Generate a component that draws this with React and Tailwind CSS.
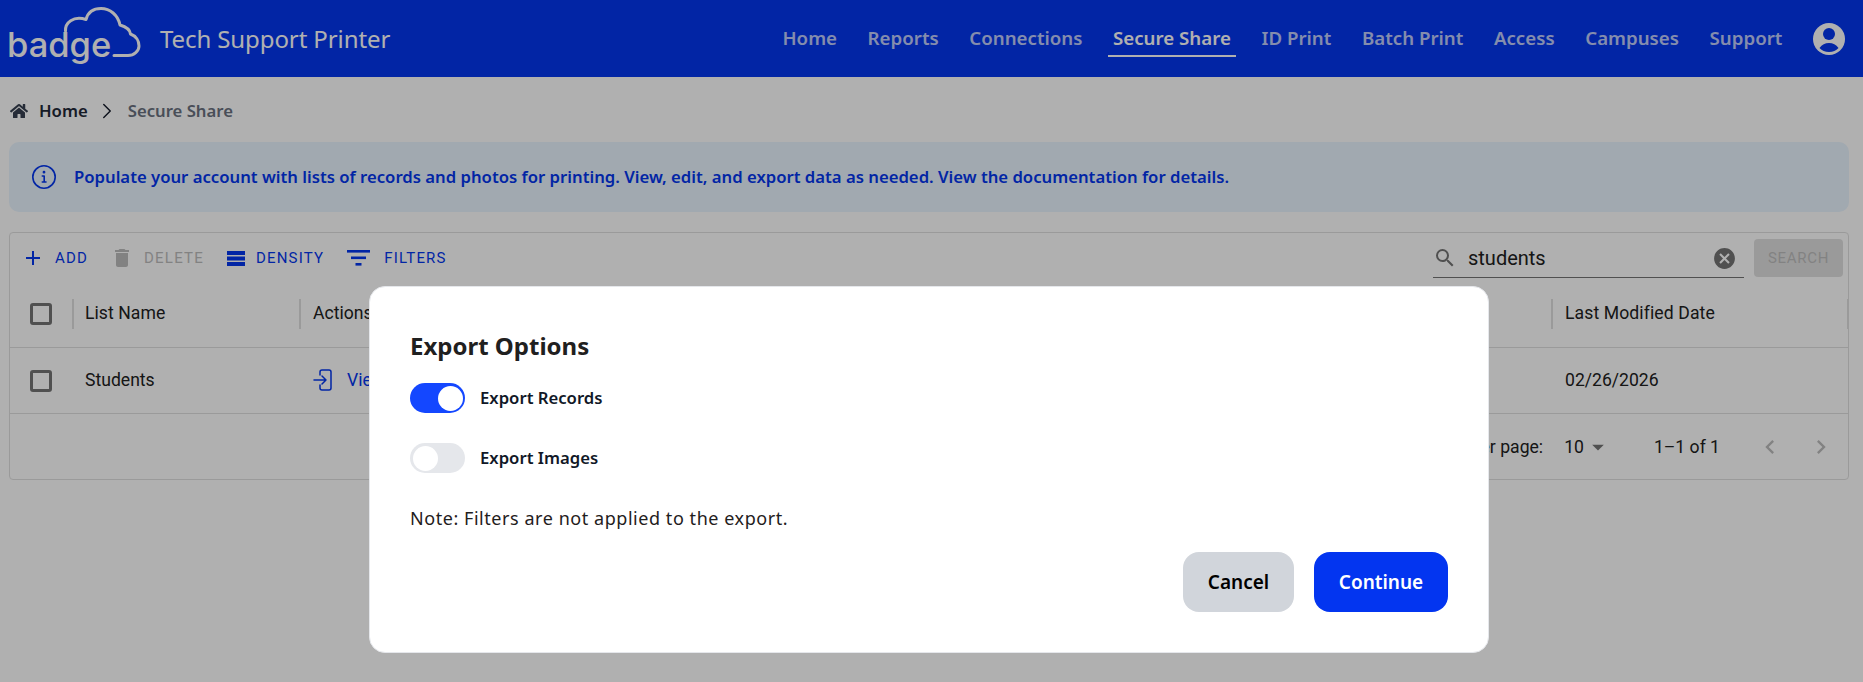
import React from "react";
import { MdAdd, MdDelete, MdSearch, MdCancel, MdArrowDropDown, MdChevronLeft, MdChevronRight } from "react-icons/md";
import { FaHome } from "react-icons/fa";
import { ChevronRight } from "lucide-react";

const seg = { fontFamily: '"Noto Sans", "Open Sans", sans-serif' };
const rob = { fontFamily: 'Roboto, sans-serif' };

const navItems = [
  ["Home", 0], ["Reports", 0], ["Connections", 0], ["Secure Share", 1], ["ID Print", 0],
  ["Batch Print", 0], ["Access", 0], ["Campuses", 0], ["Support", 0],
];

function Logo() {
  return (
    <div className="relative w-[132px] h-[77px] shrink-0">
      <svg width="142" height="77" viewBox="0 0 142 77" fill="none" className="absolute left-0 top-0">
        <path d="M65.5 31C65 23 73 15.5 86 19.5C88 12 94 8.5 101 8.5C110 8.5 118 15 120 25C127 27 130 30 130.5 34C136 36 139 41 139 46C139 51 134 55.5 128 55.5L114 55.5" stroke="#fff" strokeWidth="3" strokeLinecap="round" strokeLinejoin="round" />
      </svg>
      <span className="absolute left-[7px] top-[20px] text-[34.5px] leading-[50px] text-white font-medium" style={{ fontFamily: 'Inter, sans-serif' }}>badge</span>
    </div>
  );
}

function Checkbox() {
  return <div className="w-[22px] h-[22px] rounded-[3px] border-[3px] border-[#757575] shrink-0" />;
}

function Sep() {
  return <div className="w-[2px] h-[30px] bg-[#e0e0e0] shrink-0" />;
}

function ToolBtn({ icon, label, muted }) {
  return (
    <div className={`flex items-center ${muted ? "text-[#bdbdbd]" : "text-[#0336f0]"}`}>
      {icon}
      <span className="text-[15px] tracking-[1.2px]" style={rob}>{label}</span>
    </div>
  );
}

function Toggle({ on }) {
  return (
    <div className={`w-[55px] h-[30px] rounded-full flex items-center ${on ? "bg-[#1447ff] justify-end pr-[2px]" : "bg-[#e5e7eb] justify-start pl-[3px]"}`}>
      <div className="w-[25px] h-[25px] rounded-full bg-white" />
    </div>
  );
}

export default function App() {
  return (
    <div className="relative w-[1863px] h-[682px] overflow-hidden bg-white" style={seg}>
      <header className="h-[77px] bg-[#0336f0] flex items-center pr-[18px]">
        <Logo />
        <div className="ml-[28px] text-[24px] tracking-[-0.1px] text-white">Tech Support Printer</div>
        <nav className="ml-auto flex items-center gap-[30.6px]">
          {navItems.map(([n, active]) => (
            <div key={n} className="relative">
              <span className={`text-[18.7px] font-semibold ${active ? "text-white" : "text-white/75"}`}>{n}</span>
              {active ? <div className="absolute left-[-5px] right-[-5px] top-[31px] h-[2px] bg-white" /> : null}
            </div>
          ))}
          <svg width="32" height="32" viewBox="0 0 32 32">
            <circle cx="16" cy="16" r="16" fill="#fff" />
            <circle cx="16" cy="11" r="6" fill="#0336f0" />
            <path d="M6.5 25C9 21.5 12 20 16 20C20 20 23 21.5 25.5 25C23 27.5 20 29 16 29C12 29 9 27.5 6.5 25Z" fill="#0336f0" />
          </svg>
        </nav>
      </header>

      <div className="flex items-center h-[32px] mt-[18px] pl-[10px]">
        <FaHome className="w-[18px] h-[16px] text-[#374151]" />
        <span className="ml-[11px] text-[16.7px] font-semibold text-[#1f2937]">Home</span>
        <ChevronRight className="ml-[6px] w-[26px] h-[26px] text-[#111827]" strokeWidth={1.3} />
        <span className="ml-[8px] text-[16.7px] font-semibold text-[#6b7280]">Secure Share</span>
      </div>

      <div className="ml-[9px] mt-[15px] h-[70px] rounded-[10px] bg-[#e9f5ff] flex items-center pl-[22px] text-[#0336f0] w-[1840px]">
        <svg width="26" height="26" viewBox="0 0 26 26" fill="none" stroke="currentColor" strokeWidth="1.6">
          <circle cx="13" cy="13" r="11.2" />
          <path d="M11.3 12H13.2V18H11.3M11.3 18H15" strokeLinecap="round" strokeLinejoin="round" />
          <circle cx="13" cy="8.2" r="0.6" fill="currentColor" />
        </svg>
        <span className="ml-[17px] text-[16.7px] font-semibold">Populate your account with lists of records and photos for printing. View, edit, and export data as needed. View the documentation for details.</span>
      </div>

      <div className="ml-[9px] mt-[20px] w-[1840px] h-[248px] rounded-[4px] border border-[#e0e0e0]" style={rob}>
        <div className="h-[48px] flex items-center pl-[11px] pr-[5px] pt-[2px]">
          <div className="flex items-center">
            <ToolBtn label="ADD" icon={<MdAdd className="w-[24px] h-[24px] mr-[10px]" />} />
            <div className="ml-[22px]"><ToolBtn muted label="DELETE" icon={<MdDelete className="w-[24px] h-[24px] mr-[10px]" />} /></div>
            <div className="ml-[23px]"><ToolBtn label="DENSITY" icon={
              <svg width="18" height="15" viewBox="0 0 18 15" className="mr-[11px]" fill="currentColor"><rect width="18" height="4" /><rect y="5.5" width="18" height="4" /><rect y="11" width="18" height="4" /></svg>
            } /></div>
            <div className="ml-[23px]"><ToolBtn label="FILTERS" icon={
              <svg width="23" height="16" viewBox="0 0 23 16" className="mr-[14px]" fill="currentColor"><rect width="23" height="2.6" /><rect x="4" y="6.5" width="15" height="2.6" /><rect x="8.5" y="13" width="6" height="2.6" /></svg>
            } /></div>
          </div>
          <div className="ml-auto flex items-center">
            <div className="w-[311px] h-[39px] mt-[1px] border-b border-[#757575] flex items-center pr-[7px]">
              <MdSearch className="w-[24px] h-[24px] text-[#757575]" />
              <span className="ml-[11px] text-[20px] text-[#212121]">students</span>
              <MdCancel className="ml-auto w-[25px] h-[25px] text-[#757575]" />
            </div>
            <div className="ml-[10px] w-[89px] h-[38px] rounded-[4px] bg-[#e0e0e0] text-[#bdbdbd] flex items-center justify-center text-[15px] tracking-[0.7px]">SEARCH</div>
          </div>
        </div>
        <div className="h-[67px] flex items-center border-b border-[#e0e0e0] pl-[20px] pb-[1px] text-[17.6px] text-[#212121]">
          <Checkbox />
          <div className="ml-[20px]"><Sep /></div>
          <span className="ml-[11px] w-[214px] tracking-[0.05px]">List Name</span>
          <Sep />
          <span className="ml-[12px] w-[1238px]">Actions</span>
          <Sep />
          <span className="ml-[12px] w-[269px] tracking-[0.1px]">Last Modified Date</span>
          <div className="ml-auto w-[1px] h-[30px] bg-[#e0e0e0]" />
        </div>
        <div className="h-[66px] flex items-center border-b border-[#e0e0e0] pl-[20px] text-[17.6px] text-[#212121]">
          <Checkbox />
          <span className="ml-[33px] w-[228px]">Students</span>
          <div className="flex items-center text-[#0336f0] w-[1252px]">
            <svg width="20" height="22" viewBox="0 0 20 22" fill="none" stroke="currentColor" strokeWidth="1.5" strokeLinecap="round" strokeLinejoin="round">
              <path d="M7 6V3a2 2 0 0 1 2-2h7a2 2 0 0 1 2 2v16a2 2 0 0 1-2 2H9a2 2 0 0 1-2-2v-3" />
              <path d="M1 11h12M9 7l4 4-4 4" />
            </svg>
            <span className="ml-[14px]">View</span>
          </div>
          <span>02/26/2026</span>
        </div>
        <div className="h-[65px] flex items-center justify-end pt-[1px] pr-[13px] text-[17.6px] text-[#212121]">
          <span>Rows per page:</span>
          <span className="ml-[21px]">10</span>
          <MdArrowDropDown className="w-[28px] h-[28px] text-[#757575]" />
          <span className="ml-[42px]">1–1 of 1</span>
          <MdChevronLeft className="ml-[36px] w-[28px] h-[28px] text-[#bdbdbd]" />
          <MdChevronRight className="ml-[23px] w-[28px] h-[28px] text-[#bdbdbd]" />
        </div>
      </div>

      <div className="absolute inset-0 bg-[rgba(0,0,0,0.31)]" />

      <div className="absolute left-[369px] top-[286px] w-[1120px] h-[367px] rounded-[16px] bg-white px-[40px] pt-[43px] border border-[#e5e7eb]">
        <h2 className="text-[24px] leading-[32px] font-bold text-[#1f2020]">Export Options</h2>
        <div className="mt-[21px] flex items-center h-[30px]">
          <Toggle on />
          <span className="ml-[15px] text-[16.7px] font-semibold text-[#111827]">Export Records</span>
        </div>
        <div className="mt-[30px] flex items-center h-[30px]">
          <Toggle />
          <span className="ml-[15px] text-[16.7px] font-semibold text-[#111827]">Export Images</span>
        </div>
        <p className="mt-[31px] text-[18px] tracking-[0.55px] leading-[28px] text-[#1f2020]">Note: Filters are not applied to the export.</p>
        <div className="mt-[20px] flex justify-end gap-[20px]">
          <button className="w-[111px] h-[60px] rounded-[16px] bg-[#d1d5db] text-[19px] font-semibold text-black">Cancel</button>
          <button className="w-[134px] h-[60px] rounded-[16px] bg-[#0335f0] text-[19px] font-semibold text-white">Continue</button>
        </div>
      </div>
    </div>
  );
}
